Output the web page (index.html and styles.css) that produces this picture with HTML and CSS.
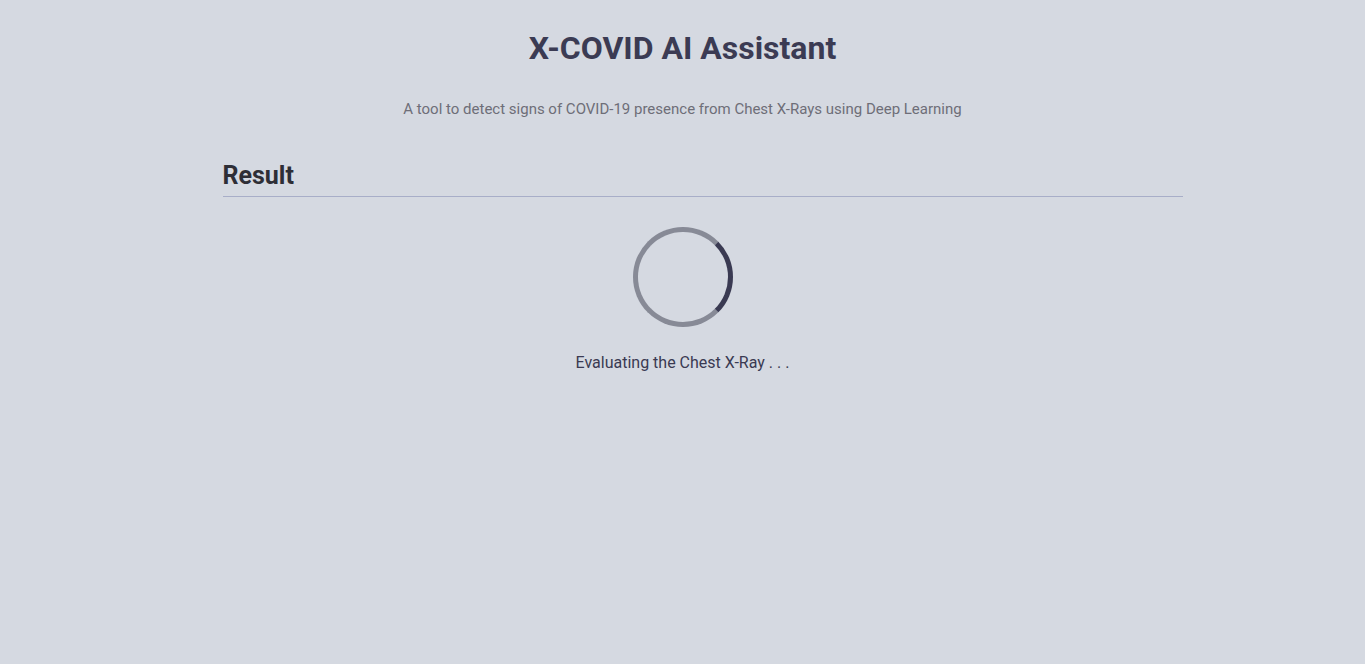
FILE: index.html
```html
<!DOCTYPE html>
<html>
<head>
<meta charset="utf-8">
<link rel="stylesheet" href="styles.css">
</head>
<body>
<div class="page">
  <h1 class="title">X-COVID AI Assistant</h1>
  <p class="subtitle">A tool to detect signs of COVID-19 presence from Chest X-Rays using Deep Learning</p>
  <section class="result">
    <h2 class="result-heading">Result</h2>
    <div class="loading">
      <div class="spinner"></div>
      <p class="loading-text">Evaluating the Chest X-Ray . . .</p>
    </div>
  </section>
</div>
</body>
</html>
```
FILE: styles.css
```css
html, body {
  margin: 0;
  padding: 0;
  background: #d5d9e1;
  font-family: Roboto, "Liberation Sans", sans-serif;
}
.page {
  display: flex;
  flex-direction: column;
  align-items: center;
  padding-top: 29px;
}
.title {
  margin: 0;
  font-size: 32px;
  font-weight: 700;
  line-height: 38px;
  color: #3b3b53;
}
.subtitle {
  margin: 33px 0 0;
  font-size: 15px;
  line-height: 18px;
  color: #6e6e78;
}
.result {
  width: 960px;
  margin-top: 42px;
  margin-left: 40px;
}
.result-heading {
  margin: 0;
  font-size: 25px;
  font-weight: 700;
  line-height: 30px;
  color: #2e2e36;
  padding-top: 1px;
  padding-bottom: 5px;
  border-bottom: 1px solid #a8aec8;
}
.loading {
  display: flex;
  flex-direction: column;
  align-items: center;
  padding-top: 30px;
  margin-left: -40px;
}
.spinner {
  width: 90px;
  height: 90px;
  border: 5px solid #878a96;
  border-right-color: #3a3a52;
  border-radius: 50%;
}
.loading-text {
  margin: 26px 0 0;
  font-size: 16px;
  line-height: 19px;
  color: #3a3a52;
}
```
